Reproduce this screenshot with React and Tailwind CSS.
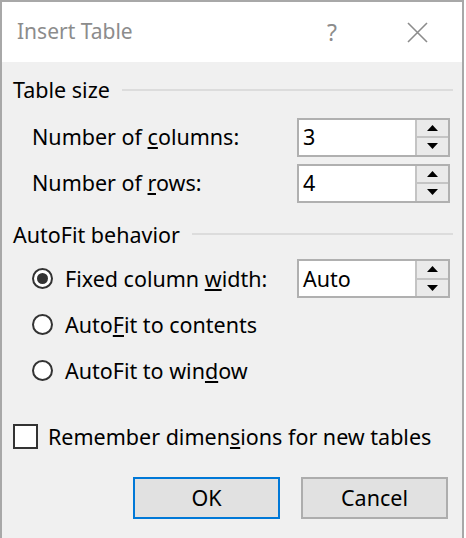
import { useState } from "react";

const FONT = { fontFamily: '"Noto Sans", "Open Sans", sans-serif' };

function Spinner({ value }) {
  return (
    <div className="flex h-[39px] w-[153px] border-2 border-[#b0b0b0] bg-white">
      <div className="flex flex-1 items-center pl-[4px] text-[21.5px] leading-none text-black">{value}</div>
      <div className="flex w-[33px] flex-col border-l-2 border-[#c4c4c4] bg-[#eaeaea]">
        <div className="flex flex-1 items-center justify-center border-b-2 border-[#c4c4c4]">
          <svg width="11" height="6" viewBox="0 0 11 6">
            <path d="M0 6 L5.5 0 L11 6 Z" fill="#000" />
          </svg>
        </div>
        <div className="flex flex-1 items-center justify-center">
          <svg width="11" height="6" viewBox="0 0 11 6">
            <path d="M0 0 L11 0 L5.5 6 Z" fill="#000" />
          </svg>
        </div>
      </div>
    </div>
  );
}

function GroupTitle({ children }) {
  return (
    <div className="flex items-center gap-[12px] pr-[9px]">
      <span className="text-[21.5px] leading-none text-black">{children}</span>
      <div className="h-[2px] flex-1 bg-[#dcdcdc]" />
    </div>
  );
}

function Radio({ checked, onClick, children }) {
  return (
    <button onClick={onClick} className="flex items-center gap-[12px] text-left">
      <span className="flex h-[21px] w-[21px] items-center justify-center rounded-full border-2 border-[#333] bg-white">
        {checked && <span className="h-[11px] w-[11px] rounded-full bg-[#333]" />}
      </span>
      <span className="text-[21.5px] leading-none text-black">{children}</span>
    </button>
  );
}

export default function App() {
  const [fit, setFit] = useState("fixed");
  const [remember, setRemember] = useState(false);

  return (
    <div style={FONT} className="h-[538px] w-[466px] bg-white">
      <div className="flex h-[538px] w-[464px] flex-col border-2 border-b-0 border-[#a8a8a8] bg-[#f0f0f0]">
        {/* title bar */}
        <div className="flex h-[60px] items-center bg-white pl-[15px] pr-[34px]">
          <span className="flex-1 text-[21px] text-[#8c8c8c]">Insert Table</span>
          <span className="mr-[70px] text-[23px] text-[#8c8c8c]">?</span>
          <svg width="21" height="21" viewBox="0 0 21 21">
            <path d="M1 1 L20 20 M20 1 L1 20" stroke="#8c8c8c" strokeWidth="1.6" />
          </svg>
        </div>

        <div className="flex flex-col pl-[11px] pt-[17px]">
          <GroupTitle>Table size</GroupTitle>
          <div className="mt-[17px] flex flex-col gap-[7px] pl-[19px] pr-[12px]">
            <div className="flex items-center justify-between">
              <span className="text-[21.5px] leading-none text-black">
                Number of <u>c</u>olumns:
              </span>
              <Spinner value="3" />
            </div>
            <div className="flex items-center justify-between">
              <span className="text-[21.5px] leading-none text-black">
                Number of <u>r</u>ows:
              </span>
              <Spinner value="4" />
            </div>
          </div>

          <div className="mt-[21px]">
            <GroupTitle>AutoFit behavior</GroupTitle>
          </div>
          <div className="mt-[14px] flex flex-col pl-[19px] pr-[12px]">
            <div className="flex items-center justify-between">
              <Radio checked={fit === "fixed"} onClick={() => setFit("fixed")}>
                Fixed column <u>w</u>idth:
              </Radio>
              <Spinner value="Auto" />
            </div>
            <div className="mt-[16px]">
              <Radio checked={fit === "contents"} onClick={() => setFit("contents")}>
                Auto<u>F</u>it to contents
              </Radio>
            </div>
            <div className="mt-[24px]">
              <Radio checked={fit === "window"} onClick={() => setFit("window")}>
                AutoFit to win<u>d</u>ow
              </Radio>
            </div>
          </div>

          <button
            onClick={() => setRemember(!remember)}
            className="mt-[43px] flex items-center gap-[10px] text-left"
          >
            <span className="flex h-[25px] w-[25px] items-center justify-center border-2 border-[#333] bg-white">
              {remember && <span className="text-[16px] leading-none">✓</span>}
            </span>
            <span className="text-[21.5px] leading-none text-black">
              Remember dimen<u>s</u>ions for new tables
            </span>
          </button>

          <div className="mt-[28px] flex justify-end gap-[21px] pr-[14px]">
            <button className="h-[42px] w-[147px] border-2 border-[#0078d7] bg-[#e1e1e1] text-[21.5px] text-black">
              OK
            </button>
            <button className="h-[42px] w-[147px] border-2 border-[#adadad] bg-[#e1e1e1] text-[21.5px] text-black">
              Cancel
            </button>
          </div>
        </div>
      </div>
    </div>
  );
}
